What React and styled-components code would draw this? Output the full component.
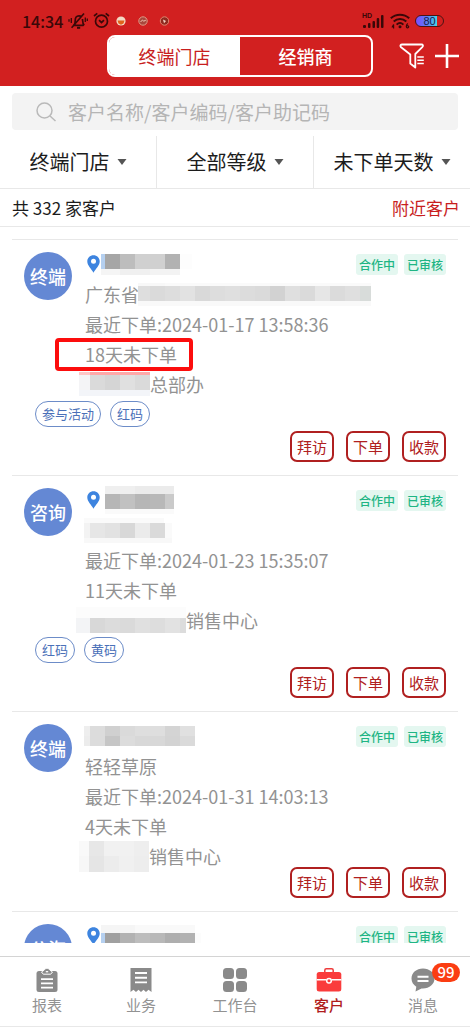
// Customer list page of the sales app
// shows the stores of the user with their last order and the actions for a visit, order or payment

import React, { useState } from "react";
import styled, { createGlobalStyle } from "styled-components";

// blurred out parts of a text: every row is [height, [[width, color], ...]]
const masks = {
  store1: [
    [15, [[4, "#b5d0f0"], [15, "#a6a6a6"], [15, "#bdbdbd"], [30, "#d0d0d0"], [15, "#b2b2b2"], [12, "#fdfdfd"]]],
    [6, [[19, "#f5f5f5"], [30, "#f0f0f0"], [30, "#f3f3f3"]]],
  ],
  address1: [
    [3, [[27, "#f8f8f8"], [206, "#fafafa"]]],
    [15, [[12, "#dedede"], [15, "#dadada"], [15, "#dddddd"], [15, "#e2e2e2"], [15, "#d9d9d9"], [15, "#dddddd"], [15, "#dfdfdf"], [15, "#dcdcdc"], [15, "#dadada"], [15, "#d2d2d2"], [15, "#dfdfdf"], [15, "#dadada"], [15, "#e6e6e6"], [15, "#dbdbdb"], [15, "#dfdfdf"], [11, "#d8dcda"]]],
    [5, [[233, "#f9f9f9"]]],
  ],
  office1: [
    [3, [[11, "#ffc6c6"], [60, "#ffa8a8"]]],
    [15, [[11, "#f4f4f6"], [15, "#dadada"], [15, "#d5d5d5"], [15, "#e0e0e0"], [15, "#dadada"]]],
    [6, [[71, "#f3f5f9"]]],
  ],
  store2: [
    [8, [[30, "#efefef"], [39, "#ebebeb"]]],
    [15, [[15, "#b6b6b6"], [15, "#c1c1c1"], [15, "#b6b6b6"], [15, "#b8b8b8"], [9, "#cacaca"]]],
    [5, [[69, "#fafafa"]]],
  ],
  address2: [
    [5, [[80, "#fafafa"]]],
    [15, [[6, "#f3f3f3"], [15, "#e6e6e6"], [15, "#e2e2e2"], [15, "#d8d8d8"], [15, "#ebebeb"], [15, "#dadada"], [7, "#fafafa"]]],
    [5, [[88, "#f8f8f8"]]],
  ],
  office2: [
    [11, [[110, "#fcfcfc"]]],
    [15, [[14, "#f3f4f6"], [15, "#d8d8d8"], [15, "#dcdcdc"], [15, "#dadada"], [15, "#e0e0e0"], [15, "#dddddd"], [15, "#e2e2e2"], [6, "#dcdcdc"]]],
  ],
  store3: [
    [10, [[6, "#eeeeee"], [15, "#dcdcdc"], [15, "#d0d0d0"], [15, "#dadada"], [30, "#dedede"], [15, "#d4d4d4"], [15, "#e0e0e0"]]],
    [10, [[6, "#ececec"], [15, "#dcdcdc"], [15, "#c6c6c6"], [15, "#dcdcdc"], [30, "#d8d8d8"], [15, "#d3d3d3"], [15, "#dadada"]]],
  ],
  office3: [
    [15, [[10, "#f9f9f9"], [15, "#e7e7e7"], [30, "#f1f1f1"], [15, "#eeeeee"]]],
    [16, [[10, "#f7f7f7"], [15, "#e5e5e5"], [15, "#ececec"], [15, "#f0f0f0"], [15, "#ededed"]]],
  ],
  store4: [
    [8, [[34, "#f5f5f5"], [60, "#f9f9f9"]]],
    [15, [[4, "#b5d0f0"], [15, "#a0a0a0"], [15, "#b2b2b2"], [15, "#bdbdbd"], [15, "#b8b8b8"], [15, "#aeaeae"], [15, "#b2b2b2"], [6, "#fcfcfc"]]],
  ],
};

const customers = [
  {
    type: "终端",
    pin: true,
    name: "store1",
    address: "广东省",
    addressMask: "address1",
    lastOrder: "2024-01-17 13:58:36",
    days: 18,
    marked: true,
    office: "总部办",
    officeMask: "office1",
    tags: ["参与活动", "红码"],
  },
  {
    type: "咨询",
    pin: true,
    name: "store2",
    addressMask: "address2",
    lastOrder: "2024-01-23 15:35:07",
    days: 11,
    office: "销售中心",
    officeMask: "office2",
    tags: ["红码", "黄码"],
  },
  {
    type: "终端",
    name: "store3",
    address: "轻轻草原",
    lastOrder: "2024-01-31 14:03:13",
    days: 4,
    office: "销售中心",
    officeMask: "office3",
    tags: [],
  },
  { type: "公海", pin: true, name: "store4" },
];

const filters = ["终端门店", "全部等级", "未下单天数"];

const Mask = ({ name, pull }) => (
  <MaskBox $pull={pull}>
    {masks[name].map(([height, cells], i) => (
      <MaskRow key={i} $height={height}>
        {cells.map(([width, color], j) => (
          <MaskCell key={j} $width={width} $color={color} />
        ))}
      </MaskRow>
    ))}
  </MaskBox>
);

const PinIcon = () => (
  <svg width="13" height="18" viewBox="0 0 13 18">
    <path d="M6.5 0.3C3 0.3.3 3 .3 6.4c0 4.200 4.200 7.200 6.200 11.300 2-4.100 6.200-7.100 6.200-11.300C12.700 3 10 .3 6.500.3z" fill="#3d84df" />
    <circle cx="6.500" cy="6.200" r="2.500" fill="#fff" />
  </svg>
);

const BellOffIcon = () => (
  <svg width="20" height="18" viewBox="0 0 20 18" fill="none" stroke="#3a0808" strokeWidth="1.700">
    <path d="M5.500 13.300h10M6.200 13c1-1 1-2 1-4.500C7.200 5.500 8.500 3.800 11 3.800c1 0 1.900.3 2.500.9M14.500 7c.2 3 0 4.600 1.700 6.300" />
    <path d="M3.600 15.800L16 1.500" />
    <path d="M9 15.800h3.200" strokeWidth="2" />
    <path d="M3.300 6v5M1 7.300v2.400M17.300 5.500v4.500M19.300 6.500v2.400" strokeWidth="1.300" />
  </svg>
);

const AlarmIcon = () => (
  <svg width="17" height="17" viewBox="0 0 17 17" fill="none" stroke="#3a0808" strokeWidth="1.700">
    <circle cx="8.500" cy="9.200" r="6" />
    <path d="M1 4l3.300-2.700M16 4l-3.300-2.700" />
    <path d="M6 8.200l2.500 2.300L11 8.200" />
  </svg>
);

const AppDots = () => (
  <svg width="56" height="12" viewBox="0 0 56 12">
    <circle cx="6" cy="6" r="4.600" fill="#f3d9c4" />
    <path d="M2.500 5.500h7L8.500 8.500 6 9.800 3.500 8.500z" fill="#e0631c" />
    <circle cx="28" cy="6" r="4.200" fill="#a8473c" stroke="#e09a86" />
    <path d="M25.500 7l2-2 1.300 1.200 2-1" stroke="#f3c9b8" fill="none" />
    <circle cx="49.500" cy="6" r="4.200" fill="#8f2a20" stroke="#e0866f" />
    <path d="M48 4.500l3 1.500-2 2.300z" fill="#f6d3c6" />
  </svg>
);

const SignalIcon = () => (
  <svg width="23" height="16" viewBox="0 0 23 16" fill="#3a0808">
    <rect x="1" y="12" width="3" height="3" rx="1" />
    <rect x="6" y="10" width="2.500" height="5" rx="1" />
    <rect x="10.500" y="8" width="2.500" height="7" rx="1" />
    <rect x="14.700" y="5" width="2.500" height="10" rx="1" />
    <rect x="19" y="2" width="2.500" height="13" rx="1" />
  </svg>
);

const WifiIcon = () => (
  <svg width="20" height="16" viewBox="0 0 20 16" fill="none" stroke="#3a0808" strokeWidth="2">
    <path d="M.8 5.300c5.200-4.800 13.200-4.800 18.400 0M3.700 8.600c3.700-3.400 8.900-3.400 12.600 0M6.600 11.600c2-1.900 4.800-1.900 6.800 0" />
    <circle cx="10" cy="13.800" r="1.500" fill="#3a0808" stroke="none" />
    <path d="M2 14.500l1.600-3v4M17.800 10.500c-2 1.500-1.800 4.300-.3 4.300 1.700 0 1.700-2.400-.6-2.200" strokeWidth="1.200" />
  </svg>
);

const FunnelIcon = () => (
  <svg width="26" height="26" viewBox="0 0 26 26" fill="none" stroke="#fff" strokeWidth="1.800" strokeLinejoin="round">
    <path d="M3.200 1.500h19.300c1.600 0 1.900 1.200 1 2.300L16.300 11v13.500l-5-4V11.500L1.800 4C.9 2.700 1.500 1.500 3.200 1.500z" />
    <path d="M18.300 14h6.500M18.300 17.300h6.500M18.300 20.600h6.500" strokeWidth="1.500" />
  </svg>
);

const PlusIcon = () => (
  <svg width="26" height="26" viewBox="0 0 26 26" stroke="#fff" strokeWidth="2.600">
    <path d="M13 1v24M1 13h24" />
  </svg>
);

const SearchIcon = () => (
  <svg width="20" height="20" viewBox="0 0 20 20" fill="none" stroke="#b9b9b9" strokeWidth="1.500">
    <circle cx="8.500" cy="8.500" r="7.500" />
    <path d="M14 14l5.500 5" />
  </svg>
);

const Arrow = () => (
  <svg width="10" height="6" viewBox="0 0 10 6">
    <path d="M0.500 0h9L5 6z" fill="#555" />
  </svg>
);

const ReportIcon = () => (
  <svg width="22" height="24" viewBox="0 0 22 24">
    <rect x="0.500" y="3" width="21" height="21" rx="2.500" fill="#8a8a8a" />
    <path d="M5.500 4L8.300 2c1-2.200 4.400-2.200 5.400 0l2.800 2-1.800 2.200H7.300z" fill="#8a8a8a" stroke="#fff" strokeWidth="1" />
    <path d="M9.800 3.700h2.400" stroke="#fff" strokeWidth="1.300" />
    <path d="M5 11.200h12M5 15.400h12M5 19.600h12" stroke="#fff" strokeWidth="1.800" />
  </svg>
);

const BusinessIcon = () => (
  <svg width="22" height="24" viewBox="0 0 22 24">
    <path d="M.5 0h21v24l-3-2.200-2.500 2.200-2.500-2.200L11 24l-2.500-2.200L6 24l-2.500-2.200L.5 24z" fill="#8a8a8a" />
    <path d="M5 5h12M5 9.700h12M5 14.400h12" stroke="#fff" strokeWidth="1.900" />
  </svg>
);

const WorkbenchIcon = () => (
  <svg width="24" height="24" viewBox="0 0 24 24" fill="#8a8a8a">
    <rect width="11" height="11" rx="3.500" />
    <rect x="13" width="11" height="11" rx="3.500" />
    <rect y="13" width="11" height="11" rx="3.500" />
    <rect x="13" y="13" width="11" height="11" rx="3.500" />
  </svg>
);

const CustomerIcon = () => (
  <svg width="26" height="24" viewBox="0 0 26 24">
    <path d="M8.800 4.500V2.300c0-1 .5-1.500 1.500-1.500h5.400c1 0 1.500.5 1.500 1.500v2.200" fill="none" stroke="#ee3b3b" strokeWidth="1.500" />
    <rect x="0.700" y="4" width="24.600" height="19.500" rx="2.500" fill="#fa3c3c" />
    <path d="M.7 11.800h9.800M15.500 11.800h9.800" stroke="#fff" strokeWidth="1.500" />
    <circle cx="13" cy="12.800" r="2.300" fill="#fa3c3c" stroke="#fff" strokeWidth="1.500" />
  </svg>
);

const MessageIcon = () => (
  <svg width="24" height="24" viewBox="0 0 24 24">
    <path d="M12 .5C5.500.5.500 4.800.500 10.500c0 3.500 1.700 6.300 4.800 8.200L4.500 23.500l6-3.100c7.500.6 13-4 13-9.900C23.500 4.800 18.500.5 12 .5z" fill="#8a8a8a" />
    <path d="M6.500 8.700h11M6.500 13h11" stroke="#fff" strokeWidth="1.900" />
  </svg>
);

const tabs = [
  { label: "报表", Icon: ReportIcon },
  { label: "业务", Icon: BusinessIcon },
  { label: "工作台", Icon: WorkbenchIcon },
  { label: "客户", Icon: CustomerIcon },
  { label: "消息", Icon: MessageIcon, count: 99 },
];

const Customer = ({ customer }) => (
  <Card>
    <Avatar>{customer.type}</Avatar>
    <Info>
      <Title>
        {customer.pin && <PinIcon />}
        <NameSlot $pin={customer.pin}>
          <Mask name={customer.name} pull={customer.name === "store2" ? -4 : customer.pin ? 0 : 1} />
        </NameSlot>
        <Status>合作中</Status>
        <Status>已审核</Status>
      </Title>
      {customer.lastOrder && (
        <>
          <Line>
            {customer.address}
            {customer.addressMask && <Mask name={customer.addressMask} pull={1} />}
          </Line>
          <Line>最近下单:{customer.lastOrder}</Line>
          <Line>
            {customer.days}天未下单
            {customer.marked && <Highlight />}
          </Line>
          <Line>
            <Mask name={customer.officeMask} pull={customer.officeMask === "office2" ? 9 : 6} />
            {customer.office}
          </Line>
        </>
      )}
    </Info>
    {customer.tags?.length > 0 && (
      <Tags>
        {customer.tags.map((tag) => (
          <Tag key={tag}>{tag}</Tag>
        ))}
      </Tags>
    )}
    {customer.lastOrder && (
      <Actions>
        <ActionButton>拜访</ActionButton>
        <ActionButton>下单</ActionButton>
        <ActionButton>收款</ActionButton>
      </Actions>
    )}
  </Card>
);

const App = () => {
  const [kind, setKind] = useState("终端门店");
  const [page, setPage] = useState("客户");

  return (
    <Page>
      <GlobalStyle />
      <Header>
        <StatusBar>
          <Time>14:34</Time>
          <BellOffIcon />
          <AlarmIcon />
          <AppDots />
          <Spacer />
          <Signal>
            <SignalIcon />
            <SignalLabel>HD</SignalLabel>
          </Signal>
          <WifiIcon />
          <Battery>80</Battery>
        </StatusBar>
        <NavRow>
          <Switch>
            {["终端门店", "经销商"].map((name) => (
              <SwitchButton key={name} $active={kind === name} onClick={() => setKind(name)}>
                {name}
              </SwitchButton>
            ))}
          </Switch>
          <NavTools>
            <IconButton aria-label="筛选">
              <FunnelIcon />
            </IconButton>
            <IconButton aria-label="新增">
              <PlusIcon />
            </IconButton>
          </NavTools>
        </NavRow>
      </Header>

      <SearchArea>
        <SearchBox>
          <SearchIcon />
          <SearchInput type="text" aria-label="搜索客户" placeholder="客户名称/客户编码/客户助记码" />
        </SearchBox>
      </SearchArea>

      <Filters>
        {filters.map((name) => (
          <Filter key={name}>
            <FilterSelect aria-label={name}>
              <option>{name}</option>
            </FilterSelect>
            <Arrow />
          </Filter>
        ))}
      </Filters>

      <Summary>
        <span>共 332 家客户</span>
        <NearbyLink href="#nearby">附近客户</NearbyLink>
      </Summary>

      <List>
        {customers.map((customer) => (
          <Customer key={customer.name} customer={customer} />
        ))}
      </List>

      <TabBar>
        {tabs.map(({ label, Icon, count }) => (
          <Tab key={label} $active={page === label} onClick={() => setPage(label)}>
            <TabIcon>
              <Icon />
              {count && <Count>{count}</Count>}
            </TabIcon>
            {label}
          </Tab>
        ))}
      </TabBar>
    </Page>
  );
};

export default App;

const GlobalStyle = createGlobalStyle`
  * {
    box-sizing: border-box;
  }

  body {
    margin: 0;
    background: #fff;
    font-family: "Noto Sans CJK SC", sans-serif;
    color: #1c1c1c;
  }

  button,
  input,
  select {
    font: inherit;
    color: inherit;
    margin: 0;
    padding: 0;
    border: none;
    background: none;
  }

  button {
    cursor: pointer;
  }

  svg {
    display: block;
    flex-shrink: 0;
  }
`;

const Page = styled.div`
  display: flex;
  flex-direction: column;
  height: 100vh;
  overflow: hidden;
`;

const Header = styled.header`
  flex-shrink: 0;
  padding-bottom: 9px;
  background: #d22020;
`;

const StatusBar = styled.div`
  display: flex;
  align-items: center;
  height: 35px;
  padding: 6px 26px 0 22px;
  gap: 5px;
`;

const Time = styled.span`
  font-size: 16px;
  font-weight: 500;
  line-height: 20px;
  color: #3a0808;
`;

const Spacer = styled.span`
  flex: 1;
`;

const Signal = styled.span`
  position: relative;
`;

const SignalLabel = styled.span`
  position: absolute;
  top: -2px;
  left: 0;
  font-family: "Liberation Sans", sans-serif;
  font-size: 7px;
  font-weight: 700;
  line-height: 10px;
  color: #3a0808;
`;

const Battery = styled.span`
  width: 29px;
  height: 12px;
  border: 1px solid #4a1414;
  border-radius: 6px;
  background: linear-gradient(90deg, #7c4dff 0, #5b7cf5 40%, #45d5e8 76%, #d22020 76%);
  font-family: "Liberation Sans", sans-serif;
  font-size: 11px;
  line-height: 10px;
  text-align: center;
  color: #1c1c4a;
`;

const NavRow = styled.div`
  display: grid;
  grid-template-columns: 1fr 266px 1fr;
  align-items: center;
  padding: 0 10px 0 20px;
`;

const Switch = styled.div`
  grid-column: 2;
  display: flex;
  height: 42px;
  border: 2px solid #fff;
  border-radius: 8px;
  overflow: hidden;
`;

const SwitchButton = styled.button`
  flex: 1;
  font-size: 18px;
  line-height: 26px;
  font-weight: ${(props) => (props.$active ? 400 : 500)};
  color: ${(props) => (props.$active ? "#c81e1e" : "#fff")};
  background: ${(props) => (props.$active ? "#fff" : "transparent")};
`;

const NavTools = styled.div`
  display: flex;
  justify-content: flex-end;
  gap: 9px;
`;

const IconButton = styled.button`
  width: 26px;
  height: 26px;
`;

const SearchArea = styled.div`
  flex-shrink: 0;
  padding: 7px 12px 6px;
`;

const SearchBox = styled.div`
  display: flex;
  align-items: center;
  gap: 12px;
  height: 37px;
  padding: 0 24px;
  border-radius: 4px;
  background: #f3f3f3;
`;

const SearchInput = styled.input`
  flex: 1;
  min-width: 0;
  font-size: 19px;
  line-height: 28px;
  outline: none;

  &::placeholder {
    color: #b5b5b5;
  }
`;

const Filters = styled.div`
  display: flex;
  flex-shrink: 0;
  height: 53px;
  border-bottom: 1px solid #e8e8e8;
`;

const Filter = styled.div`
  flex: 1;
  display: flex;
  align-items: center;
  justify-content: center;
  gap: 7px;
  white-space: nowrap;

  & + & {
    border-left: 1px solid #e8e8e8;
  }
`;

const FilterSelect = styled.select`
  appearance: none;
  font-size: 20px;
  line-height: 28px;
  outline: none;
`;

const Summary = styled.div`
  display: flex;
  align-items: center;
  justify-content: space-between;
  flex-shrink: 0;
  height: 38px;
  padding: 0 10px 0 12px;
  border-bottom: 1px solid #e8e8e8;
  font-size: 17px;
  line-height: 24px;
`;

const NearbyLink = styled.a`
  color: #c81e1e;
  text-decoration: none;
`;

const List = styled.main`
  flex: 1;
  min-height: 0;
  margin-bottom: 13px;
  padding: 12px 12px 0;
  overflow-y: auto;
  scrollbar-width: none;
`;

const Card = styled.article`
  display: grid;
  grid-template-columns: 48px 1fr;
  column-gap: 13px;
  padding: 9px 12px 13px;
  border-top: 1px solid #e8e8e8;
`;

const Avatar = styled.div`
  height: 48px;
  margin-top: 3px;
  border-radius: 50%;
  background: #6488d4;
  font-size: 18px;
  font-weight: 500;
  line-height: 48px;
  text-align: center;
  color: #fff;
`;

const Info = styled.div`
  min-width: 0;
  font-size: 18px;
  color: #929292;
`;

const Line = styled.div`
  position: relative;
  display: flex;
  align-items: center;
  height: 30px;
  white-space: nowrap;
`;

const Title = styled(Line)`
  gap: 6px;
  padding-left: 2px;
`;

const NameSlot = styled.div`
  flex: 1;
  display: flex;
  align-items: center;
  height: 30px;
  margin-left: ${(props) => (props.$pin ? "-5px" : "-2px")};
`;

const Status = styled.span`
  height: 21px;
  padding: 0 3px;
  border-radius: 3px;
  background: #e4f7f0;
  font-size: 12px;
  font-weight: 500;
  line-height: 21px;
  color: #1fb584;
`;

const MaskBox = styled.span`
  display: block;
  flex-shrink: 0;
  margin-left: ${(props) => -(props.$pull || 0)}px;
`;

const MaskRow = styled.span`
  display: flex;
  height: ${(props) => props.$height}px;
`;

const MaskCell = styled.span`
  width: ${(props) => props.$width}px;
  background: ${(props) => props.$color};
`;

// red frame around the days without an order
const Highlight = styled.span`
  position: absolute;
  top: -1px;
  left: -30px;
  width: 138px;
  height: 33px;
  border: 4px solid #fc0d0d;
  border-radius: 4px;
`;

const Tags = styled.div`
  grid-column: 1 / -1;
  display: flex;
  gap: 9px;
  margin: 2px 0 8px 11px;
`;

const Tag = styled.span`
  height: 26px;
  padding: 0 6px;
  border: 1px solid #6c8cc8;
  border-radius: 13px;
  font-size: 13px;
  line-height: 24px;
  color: #4a70b8;
`;

const Actions = styled.div`
  grid-column: 1 / -1;
  display: flex;
  justify-content: flex-end;
  gap: 12px;
  margin-top: -4px;
`;

const ActionButton = styled.button`
  width: 44px;
  height: 31px;
  border: 2px solid #b02020;
  border-radius: 7px;
  font-size: 15px;
  line-height: 22px;
  color: #b02020;
`;

const TabBar = styled.nav`
  display: flex;
  flex-shrink: 0;
  height: 71px;
  border-top: 1px solid #d4d4d4;
  border-bottom: 1px solid #e8e8e8;
`;

const Tab = styled.button`
  flex: 1;
  display: flex;
  flex-direction: column;
  align-items: center;
  gap: 2px;
  padding-top: 11px;
  font-size: 15px;
  font-weight: ${(props) => (props.$active ? 500 : 400)};
  line-height: 22px;
  color: ${(props) => (props.$active ? "#b01c1c" : "#929292")};
`;

const TabIcon = styled.span`
  position: relative;
  height: 24px;
`;

const Count = styled.span`
  position: absolute;
  top: -5px;
  left: 21px;
  width: 28px;
  height: 19px;
  border-radius: 10px;
  background: #fb3d12;
  font-size: 15px;
  line-height: 18px;
  font-weight: 500;
  text-align: center;
  color: #fff;
`;
